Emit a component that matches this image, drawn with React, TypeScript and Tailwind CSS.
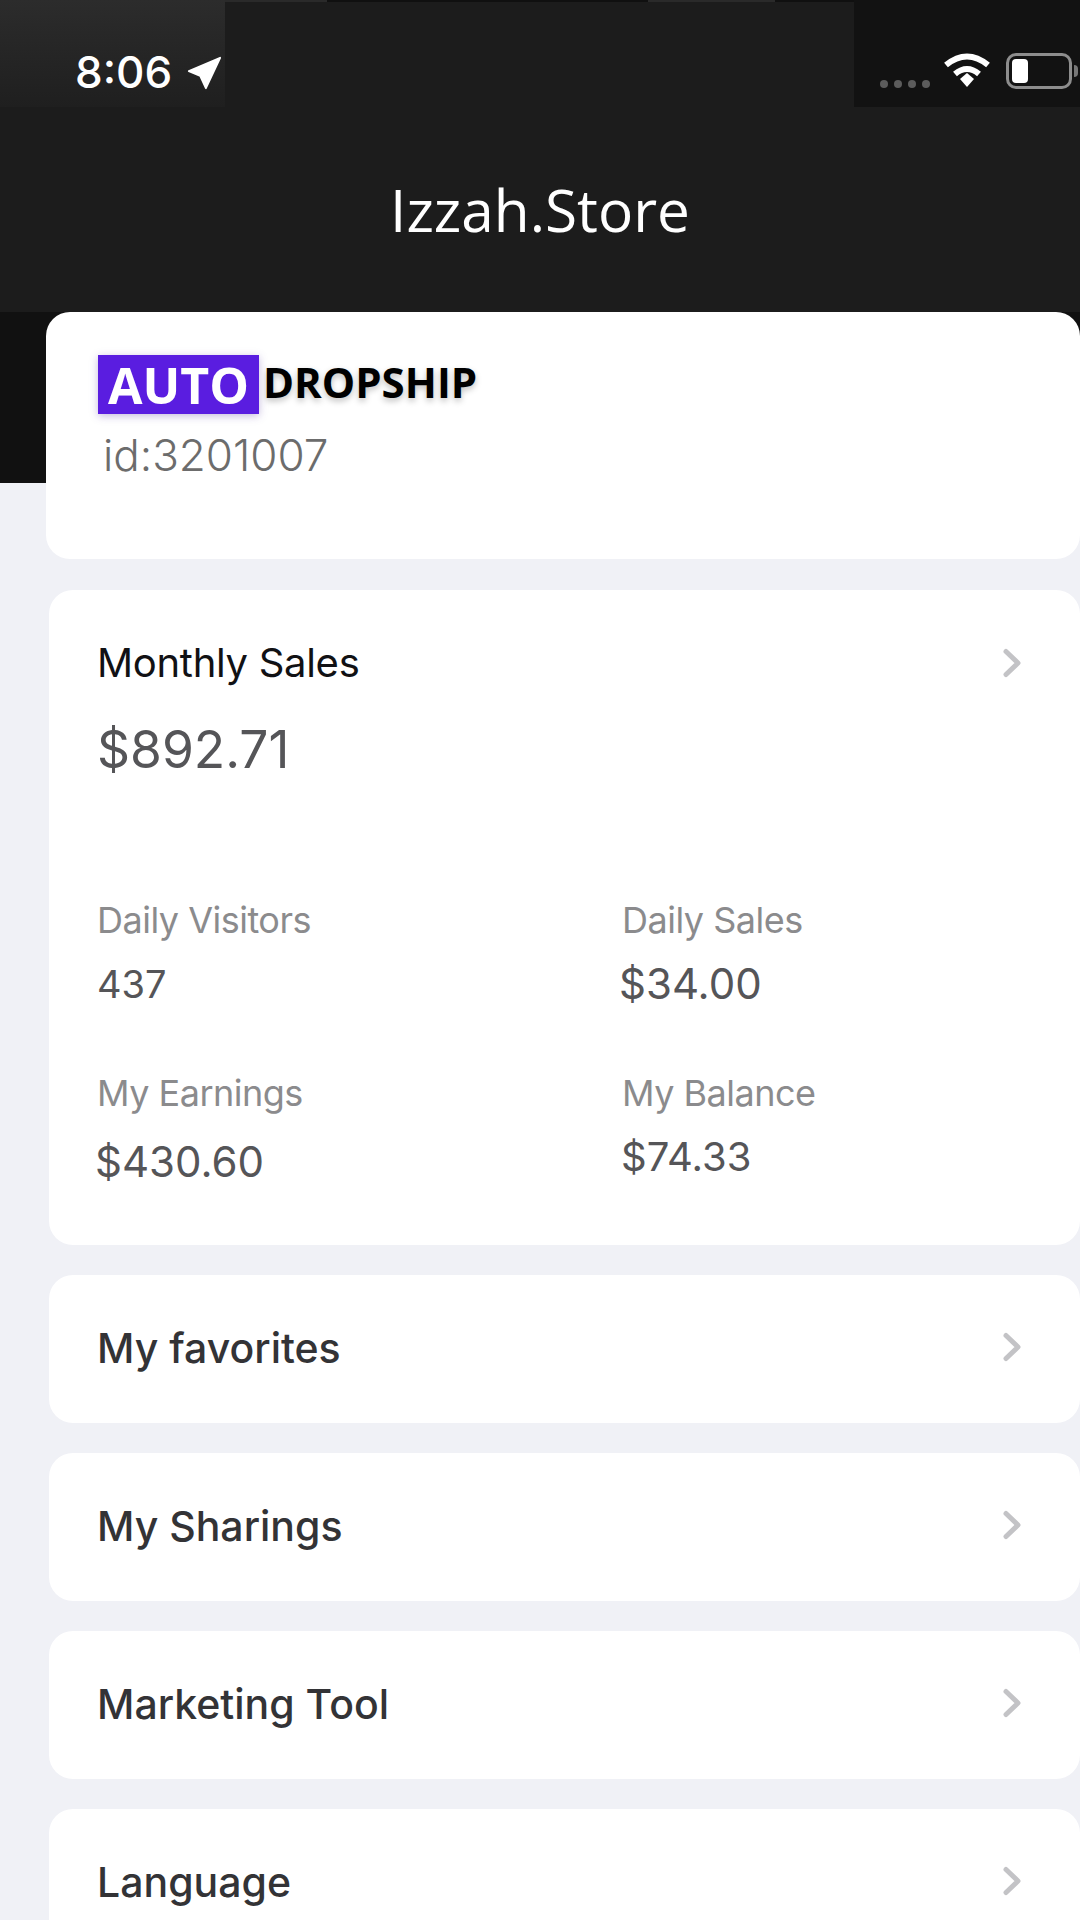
const sans = "font-['Inter','Liberation_Sans',sans-serif]";

function Chevron({ lift = "" }: { lift?: string }) {
  return (
    <svg className={`w-[20px] h-[30px] shrink-0 ${lift}`} viewBox="0 0 20 30" fill="none" stroke="#c3c3c6" strokeWidth="5" strokeLinecap="round" strokeLinejoin="round">
      <path d="M4 3.5L16 15L4 26.5" />
    </svg>
  );
}

function Stat({ label, value, valueClass }: { label: string; value: string; valueClass: string }) {
  return (
    <div>
      <div className={`text-[36px] leading-[40px] text-[#8b8b8d] tracking-[-0.5px] ${sans}`}>{label}</div>
      <div className={`mt-[21px] leading-[46px] text-[#555558] ${valueClass} ${sans}`}>{value}</div>
    </div>
  );
}

function Row({ label }: { label: string }) {
  return (
    <div className="h-[148px] bg-white rounded-[24px] flex items-center justify-between pl-[48px] pr-[58px]">
      <span className={`text-[41px] font-medium text-[#333336] ${sans}`}>{label}</span>
      <Chevron lift="mb-[4px]" />
    </div>
  );
}

export default function App() {
  return (
    <div className="w-[1080px] h-[1920px] overflow-hidden bg-[#f0f1f6]">
      <header className="h-[312px] bg-[#1c1c1c]">
        <div className="h-[107px] flex">
          <div className="w-[225px] bg-gradient-to-b from-[#2c2c2c] to-[#1f1f1f] flex items-start pt-[46px] pl-[75px] gap-[14px]">
            <span className="text-[44px] leading-[52px] font-medium text-white font-['Inter',sans-serif]">8:06</span>
            <svg className="w-[36px] h-[36px] mt-[9px] shrink-0" viewBox="0 0 38 38" fill="white" stroke="white" strokeWidth="2" strokeLinejoin="round">
              <path d="M3 17L36 3L21 35L15 22Z" />
            </svg>
          </div>
          <div className="flex-1 flex items-start">
            <span className="w-[102px] h-[2px] bg-[#2a2a2a]" />
            <span className="w-[321px] h-[2px] bg-[#101010]" />
            <span className="w-[127px] h-[2px] bg-[#2a2a2a]" />
            <span className="flex-1 h-[2px] bg-[#101010]" />
          </div>
          <div className="w-[226px] bg-[#121212] flex items-start pt-[53px] pl-[26px]">
            <div className="flex gap-[6px] mt-[27px] mr-[13px]">
              <span className="w-[8px] h-[8px] rounded-full bg-[#5c5c5c]" />
              <span className="w-[8px] h-[8px] rounded-full bg-[#5c5c5c]" />
              <span className="w-[8px] h-[8px] rounded-full bg-[#5c5c5c]" />
              <span className="w-[8px] h-[8px] rounded-full bg-[#5c5c5c]" />
            </div>
            <svg className="w-[48px] h-[36px] mr-[15px] shrink-0" viewBox="0 0 48 36" fill="none" stroke="white" strokeWidth="6">
              <path d="M3 12Q24 -5 45 12" />
              <path d="M12 21Q24 11 36 21" />
              <path d="M17 26L24 20L31 26L24 34Z" fill="white" stroke="none" />
            </svg>
            <div className="w-[66px] h-[36px] rounded-[10px] border-[3px] border-[#8d8d8d] p-[3px] shrink-0">
              <div className="w-[16px] h-full rounded-[4px] bg-white" />
            </div>
            <div className="w-[4px] h-[12px] mt-[12px] ml-[2px] rounded-r-full bg-[#777777]" />
          </div>
        </div>
        <h1 className="mt-[65px] text-center text-[58.5px] leading-[74px] text-white font-normal font-['Open_Sans',sans-serif]">Izzah.Store</h1>
      </header>

      <div className="pl-[46px] h-[278px] bg-[linear-gradient(#111111_0_171px,#f0f1f6_171px)]">
        <div className="h-[247px] bg-white rounded-[24px] pl-[52px] pt-[43px]">
          <div className="flex items-start">
            <div className="w-[161px] h-[59px] bg-[#5a1de0] shadow-[0_2px_8px_rgba(90,60,160,0.35)] text-center font-['Open_Sans',sans-serif] font-bold text-[50px] leading-[60px] text-white">AUTO</div>
            <div className="ml-[4px] mt-[2px] font-['Open_Sans',sans-serif] font-bold text-[42px] leading-[50px] text-black [text-shadow:0_3px_6px_rgba(0,0,0,0.25)]">DROPSHIP</div>
          </div>
          <div className="mt-[16px] ml-[5px] text-[44px] leading-[50px] text-[#6c6c6c] font-light font-['Inter',sans-serif]">id:3201007</div>
        </div>
      </div>

      <div className="flex flex-col gap-[30px] pl-[49px]">
        <section className="h-[655px] bg-white rounded-[24px] pl-[49px] pr-[58px] pt-[47px]">
          <div className="flex items-center justify-between h-[52px] -ml-[1px]">
            <span className={`text-[40px] text-[#111114] tracking-[-0.3px] ${sans}`}>Monthly Sales</span>
            <Chevron />
          </div>
          <div className={`mt-[30px] -ml-[1px] text-[51.5px] leading-[60px] text-[#555558] ${sans}`}>$892.71</div>
          <div className="mt-[121px] -ml-[1px] grid grid-cols-[525px_1fr] gap-y-[66px]">
            <Stat label="Daily Visitors" value="437" valueClass="text-[38px]" />
            <Stat label="Daily Sales" value="$34.00" valueClass="text-[42px] -ml-[3px]" />
            <Stat label="My Earnings" value="$430.60" valueClass="text-[42px] -ml-[2px] !mt-[26px]" />
            <Stat label="My Balance" value="$74.33" valueClass="text-[40px] -ml-[1px]" />
          </div>
        </section>
        <Row label="My favorites" />
        <Row label="My Sharings" />
        <Row label="Marketing Tool" />
        <Row label="Language" />
      </div>
    </div>
  );
}
